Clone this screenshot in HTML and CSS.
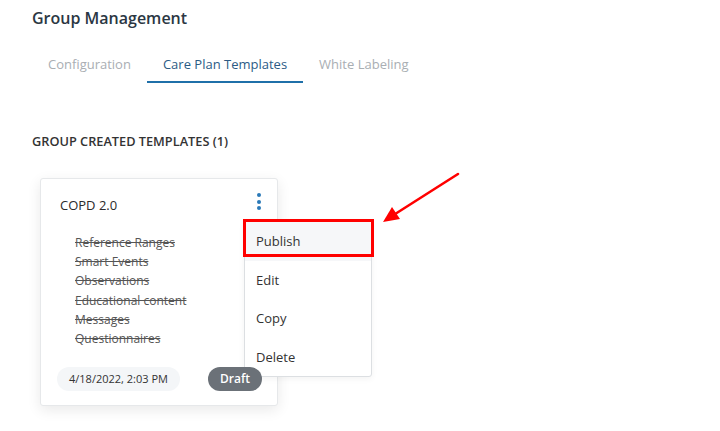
FILE: index.html
```html
<!DOCTYPE html>
<html>
<head>
<meta charset="utf-8">
<link rel="stylesheet" href="styles.css">
</head>
<body>
<div class="page">
  <h1 class="title">Group Management</h1>
  <nav class="tabs">
    <div class="tab">Configuration</div>
    <div class="tab active">Care Plan Templates</div>
    <div class="tab">White Labeling</div>
  </nav>
  <h2 class="section">GROUP CREATED TEMPLATES (1)</h2>
  <div class="card-wrap">
    <div class="card">
      <div class="card-head">
        <span class="card-title">COPD 2.0</span>
        <span class="kebab"><i></i><i></i><i></i></span>
      </div>
      <ul class="items">
        <li>Reference Ranges</li>
        <li>Smart Events</li>
        <li>Observations</li>
        <li>Educational content</li>
        <li>Messages</li>
        <li>Questionnaires</li>
      </ul>
      <div class="card-foot">
        <span class="date">4/18/2022, 2:03 PM</span>
        <span class="badge">Draft</span>
      </div>
    </div>
    <div class="menu">
      <div class="menu-item hover">Publish</div>
      <div class="menu-item">Edit</div>
      <div class="menu-item">Copy</div>
      <div class="menu-item">Delete</div>
    </div>
    <div class="highlight"></div>
  </div>
  <svg class="arrow" width="100" height="70" viewBox="0 0 100 70">
    <line x1="88" y1="6" x2="22" y2="48" stroke="#ff0000" stroke-width="2.6" stroke-linecap="round"/>
    <polygon points="13,54 22,39 30,51" fill="#ff0000"/>
  </svg>
</div>
</body>
</html>
```
FILE: styles.css
```css
* { box-sizing: border-box; }
html, body { margin: 0; padding: 0; background: #ffffff; }
body {
  font-family: "Open Sans", "Noto Sans", sans-serif;
  color: #333;
  width: 720px;
  height: 431px;
  overflow: hidden;
}
.page {
  position: relative;
  padding: 6px 32px 0 32px;
}
.title {
  margin: 0;
  font-size: 16px;
  line-height: 24px;
  font-weight: 600;
  color: #2b3743;
}
.tabs {
  display: flex;
  margin-top: 14px;
}
.tab {
  padding: 11px 16px 8px;
  font-size: 13px;
  line-height: 18px;
  color: #a9aeb3;
  border-bottom: 2px solid transparent;
}
.tab.active {
  color: #2c5b85;
  border-bottom-color: #1f70a9;
}
.section {
  margin: 49px 0 0 0;
  font-size: 12.75px;
  line-height: 18px;
  font-weight: 600;
  color: #333;
}
.card-wrap {
  position: relative;
  margin: 28px 0 0 8px;
  width: 238px;
}
.card {
  width: 238px;
  height: 228px;
  border: 1px solid #e6e8ea;
  border-radius: 3px;
  background: #fff;
  box-shadow: 0 4px 14px rgba(0, 0, 0, 0.09);
  padding: 15px 15px 15px 19px;
  display: flex;
  flex-direction: column;
}
.card-head {
  display: flex;
  justify-content: space-between;
  align-items: flex-start;
}
.card-title {
  font-size: 13px;
  line-height: 20px;
  color: #2b2b2b;
  padding-top: 1px;
}
.kebab {
  display: flex;
  flex-direction: column;
  gap: 2.5px;
  padding: 0 1px 0 0;
  margin-top: -1px;
}
.kebab i {
  display: block;
  width: 4px;
  height: 4px;
  border-radius: 50%;
  background: #2a79b8;
}
.items {
  list-style: none;
  margin: 18px 0 0 0;
  padding: 0 0 0 15px;
}
.items li {
  font-size: 12px;
  line-height: 19.2px;
  color: #555;
  text-decoration: line-through;
}
.card-foot {
  margin-top: auto;
  display: flex;
  justify-content: space-between;
  align-items: center;
  margin-left: -3px;
  margin-bottom: -1px;
}
.date {
  height: 24px;
  line-height: 24px;
  padding: 0 12px;
  border-radius: 12px;
  background: #f4f6f8;
  font-size: 11px;
  color: #333;
}
.badge {
  position: relative;
  z-index: 3;
  height: 24px;
  line-height: 24px;
  padding: 0 12px;
  border-radius: 12px;
  background: #6b7178;
  color: #fff;
  font-size: 12px;
  font-weight: 600;
}
.menu {
  position: absolute;
  z-index: 1;
  left: 204px;
  top: 43px;
  width: 128px;
  background: #fff;
  border: 1px solid #dcdfe2;
  border-radius: 3px;
  box-shadow: 0 2px 6px rgba(0, 0, 0, 0.05);
}
.menu-item {
  height: 38.5px;
  line-height: 38px;
  padding: 0 11px;
  font-size: 13px;
  color: #333;
}
.menu-item.hover {
  background: #f6f7f9;
}
.highlight {
  position: absolute;
  z-index: 2;
  left: 203px;
  top: 41px;
  width: 131px;
  height: 38px;
  border: 3px solid #ff0000;
}
.arrow {
  position: absolute;
  left: 370px;
  top: 168px;
}
```
